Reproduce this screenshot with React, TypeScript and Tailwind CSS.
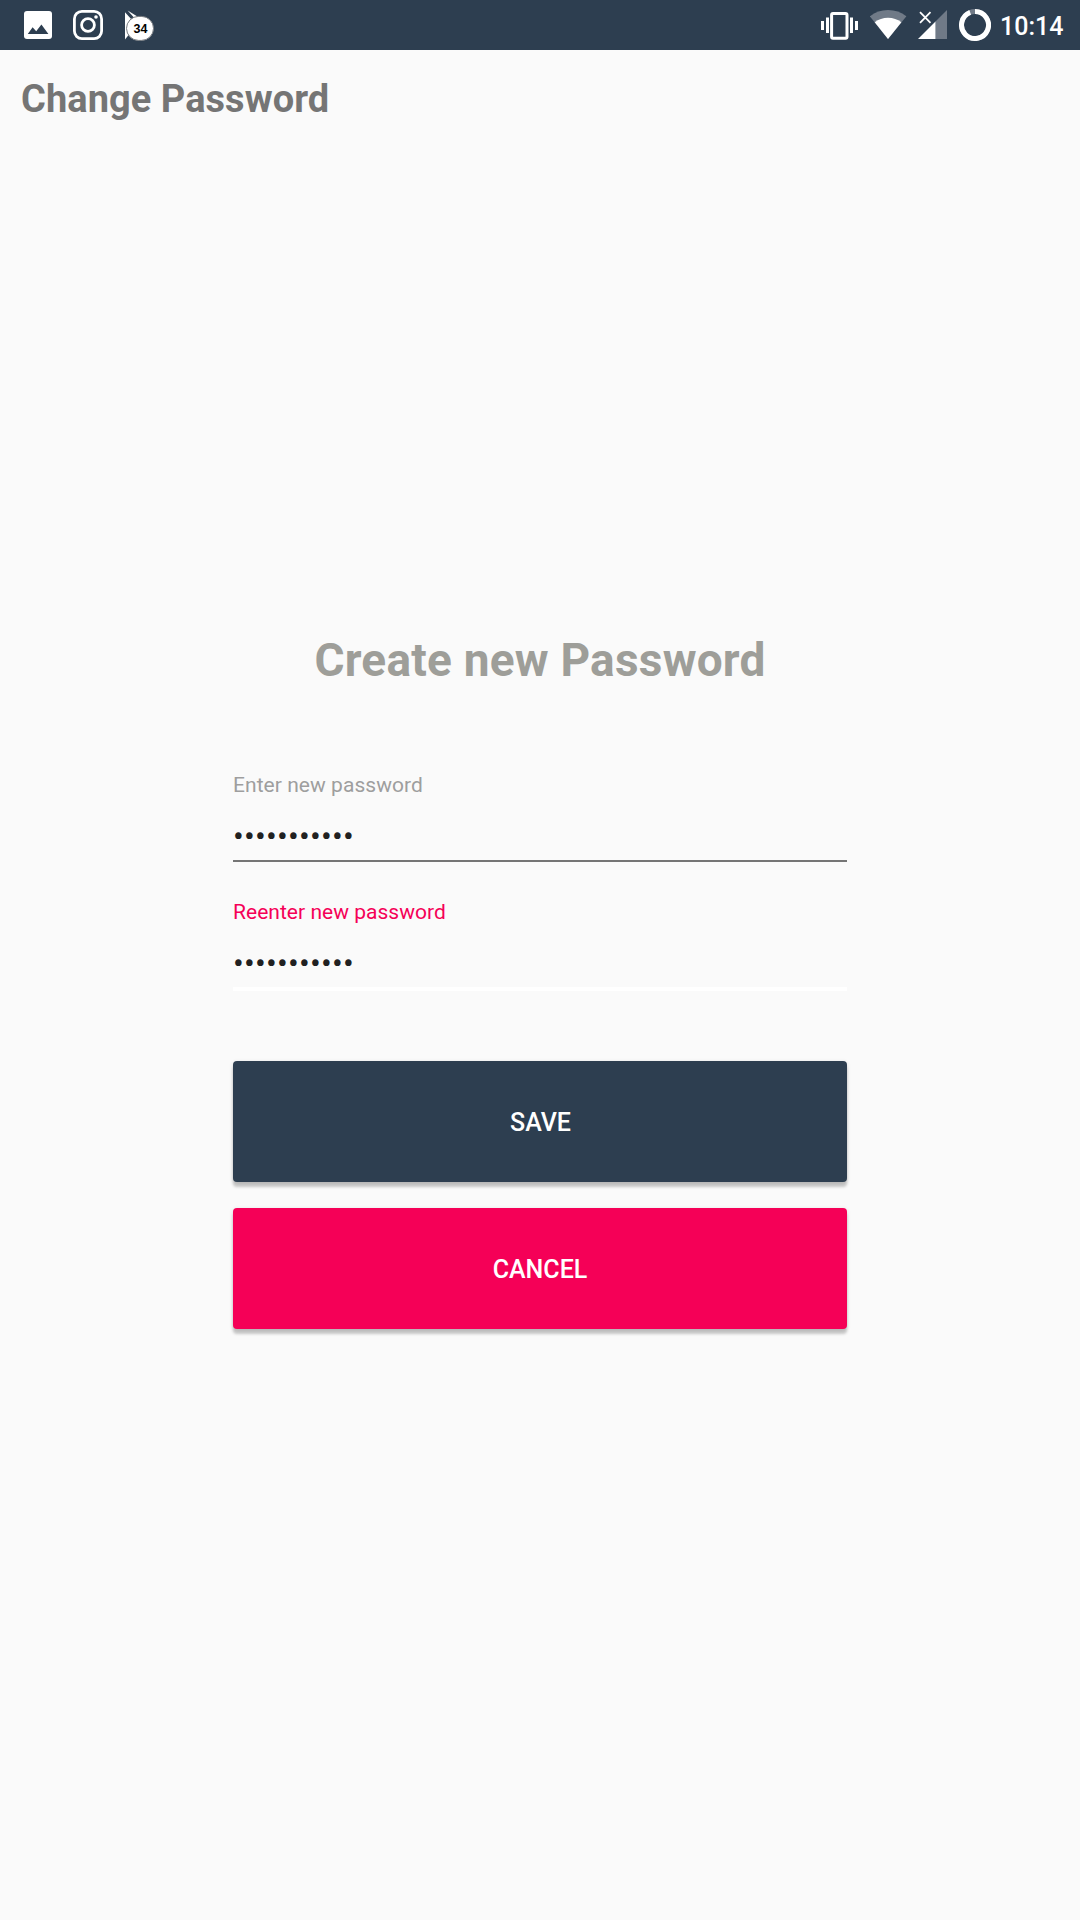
import React from 'react';

function ImageIcon() {
  return (
    <svg className="h-[50px] w-[28px]" viewBox="24 0 28 50">
      <rect x="24" y="11" width="28" height="28" rx="3" fill="#fff" />
      <path d="M27.8 34L32.6 27.2L36.2 31.2L41.4 24.6L48.4 34Z" fill="#2d3e50" />
    </svg>
  );
}

function InstagramIcon() {
  return (
    <svg className="ml-[21px] h-[50px] w-[30px]" viewBox="73 0 30 50" fill="none" stroke="#fff">
      <rect x="74.4" y="11.4" width="27.2" height="27.2" rx="7.5" strokeWidth="2.8" />
      <circle cx="88" cy="25" r="6.4" strokeWidth="2.8" />
      <circle cx="96" cy="17" r="1.8" fill="#fff" stroke="none" />
    </svg>
  );
}

function PlayBadgeIcon() {
  return (
    <span className="relative ml-[22px] block h-[50px] w-[29px]">
      <svg className="h-[50px] w-[29px]" viewBox="125 0 29 50">
        <path d="M125 12.3L136.5 25L125 39.5Z" fill="#fff" />
        <path d="M127.6 10.6L137 16.3L134.6 18.2Z" fill="#fff" />
        <rect x="126.5" y="16.4" width="27" height="24" rx="12" fill="#fff" stroke="#777b80" strokeWidth="1" />
      </svg>
      <span className="absolute top-[22px] left-[2px] w-[27px] text-center font-['Liberation_Sans'] text-[12.5px] leading-[14px] font-bold text-black">
        34
      </span>
    </span>
  );
}

function VibrateIcon() {
  return (
    <svg className="h-[50px] w-[37px]" viewBox="821 0 37 50" fill="#fff">
      <rect x="821" y="21" width="3" height="9" />
      <rect x="826" y="17.5" width="3" height="15.5" />
      <rect x="831.6" y="13.6" width="15.4" height="24.6" rx="1.4" fill="none" stroke="#fff" strokeWidth="3" />
      <rect x="850" y="17.5" width="3" height="15.5" />
      <rect x="855" y="21" width="3" height="9" />
    </svg>
  );
}

function WifiIcon() {
  return (
    <svg className="ml-[12px] h-[50px] w-[37px]" viewBox="870 0 37 50" fill="#fff">
      <path d="M888 39L869.8 16.3C875 12.2 881 10 888 10S901 12.2 906.4 16.3Z" fill="#707a87" />
      <path d="M888 39L874.7 22.3C878.5 19.4 883 17.8 888 17.8S897.6 19.4 901.4 22.3Z" />
    </svg>
  );
}

function SignalIcon() {
  return (
    <svg className="ml-[11px] h-[50px] w-[29px]" viewBox="918 0 29 50">
      <path d="M935.5 21.5L947 10V39H935.5Z" fill="#707a87" />
      <path d="M918 39L935.5 21.5V39Z" fill="#fff" />
      <path d="M920 12.2L930.5 22.8M930.5 12.2L920 22.8" stroke="#fff" strokeWidth="1.8" />
    </svg>
  );
}

function BatteryIcon() {
  return (
    <svg className="ml-[12px] h-[50px] w-[32px]" viewBox="959 0 32 50" fill="none" strokeWidth="5">
      <circle cx="975" cy="25" r="13.5" stroke="#707a87" />
      <path d="M975 11.5A13.5 13.5 0 1 1 970.2 12.4" stroke="#fff" />
    </svg>
  );
}

function StatusBar() {
  return (
    <header className="flex h-[50px] items-center bg-[#2d3e50] pr-[15px] pl-[24px]">
      <ImageIcon />
      <InstagramIcon />
      <PlayBadgeIcon />
      <div className="ml-auto flex items-center">
        <VibrateIcon />
        <WifiIcon />
        <SignalIcon />
        <BatteryIcon />
        <span className="ml-[9px] w-[65px] pt-[3px] text-[25px] leading-[46px] font-medium whitespace-nowrap text-white">10:14</span>
      </div>
    </header>
  );
}

function Field({ label, active }: { label: string; active?: boolean }) {
  return (
    <div className="flex h-[127px] flex-col">
      <span
        className={
          active
            ? 'text-[21px] leading-6 tracking-[0.03px] text-[#f50057]'
            : 'text-[21px] leading-6 tracking-[0.05px] text-[#9e9e9e]'
        }
      >
        {label}
      </span>
      <span className="mt-[19px] text-[32px] leading-[40px] tracking-[0.2px] text-[#212121]">•••••••••••</span>
      <span className={active ? 'mt-1 h-1 bg-white' : 'mt-1 h-0.5 bg-[#757575]'} />
    </div>
  );
}

export default function App() {
  return (
    <div className="flex h-[1920px] w-[1080px] flex-col overflow-hidden bg-[#fafafa] font-[Roboto,sans-serif]">
      <StatusBar />
      <h1 className="mt-[25px] ml-[21px] text-[38px] leading-[48px] font-bold tracking-[0.05px] text-[#757575]">Change Password</h1>
      <main className="mx-auto mt-[507px] flex w-[614px] flex-col">
        <h2 className="text-center text-[46px] leading-[60px] font-bold tracking-[0.22px] text-[#9e9e99]">Create new Password</h2>
        <form className="mt-[83px] flex flex-col">
          <Field label="Enter new password" />
          <Field label="Reenter new password" active />
          <button
            type="button"
            className="mt-[34px] h-[121px] rounded-[4px] bg-[#2d3e50] pt-[3px] pl-px text-[25px] font-medium text-white shadow-[0_5px_3px_rgba(0,0,0,0.2),0_1px_4px_rgba(0,0,0,0.12)]"
          >
            SAVE
          </button>
          <button
            type="button"
            className="mt-[26px] h-[121px] rounded-[4px] bg-[#f50057] pt-[3px] text-[25px] font-medium text-white shadow-[0_5px_3px_rgba(0,0,0,0.2),0_1px_4px_rgba(0,0,0,0.12)]"
          >
            CANCEL
          </button>
        </form>
      </main>
    </div>
  );
}
